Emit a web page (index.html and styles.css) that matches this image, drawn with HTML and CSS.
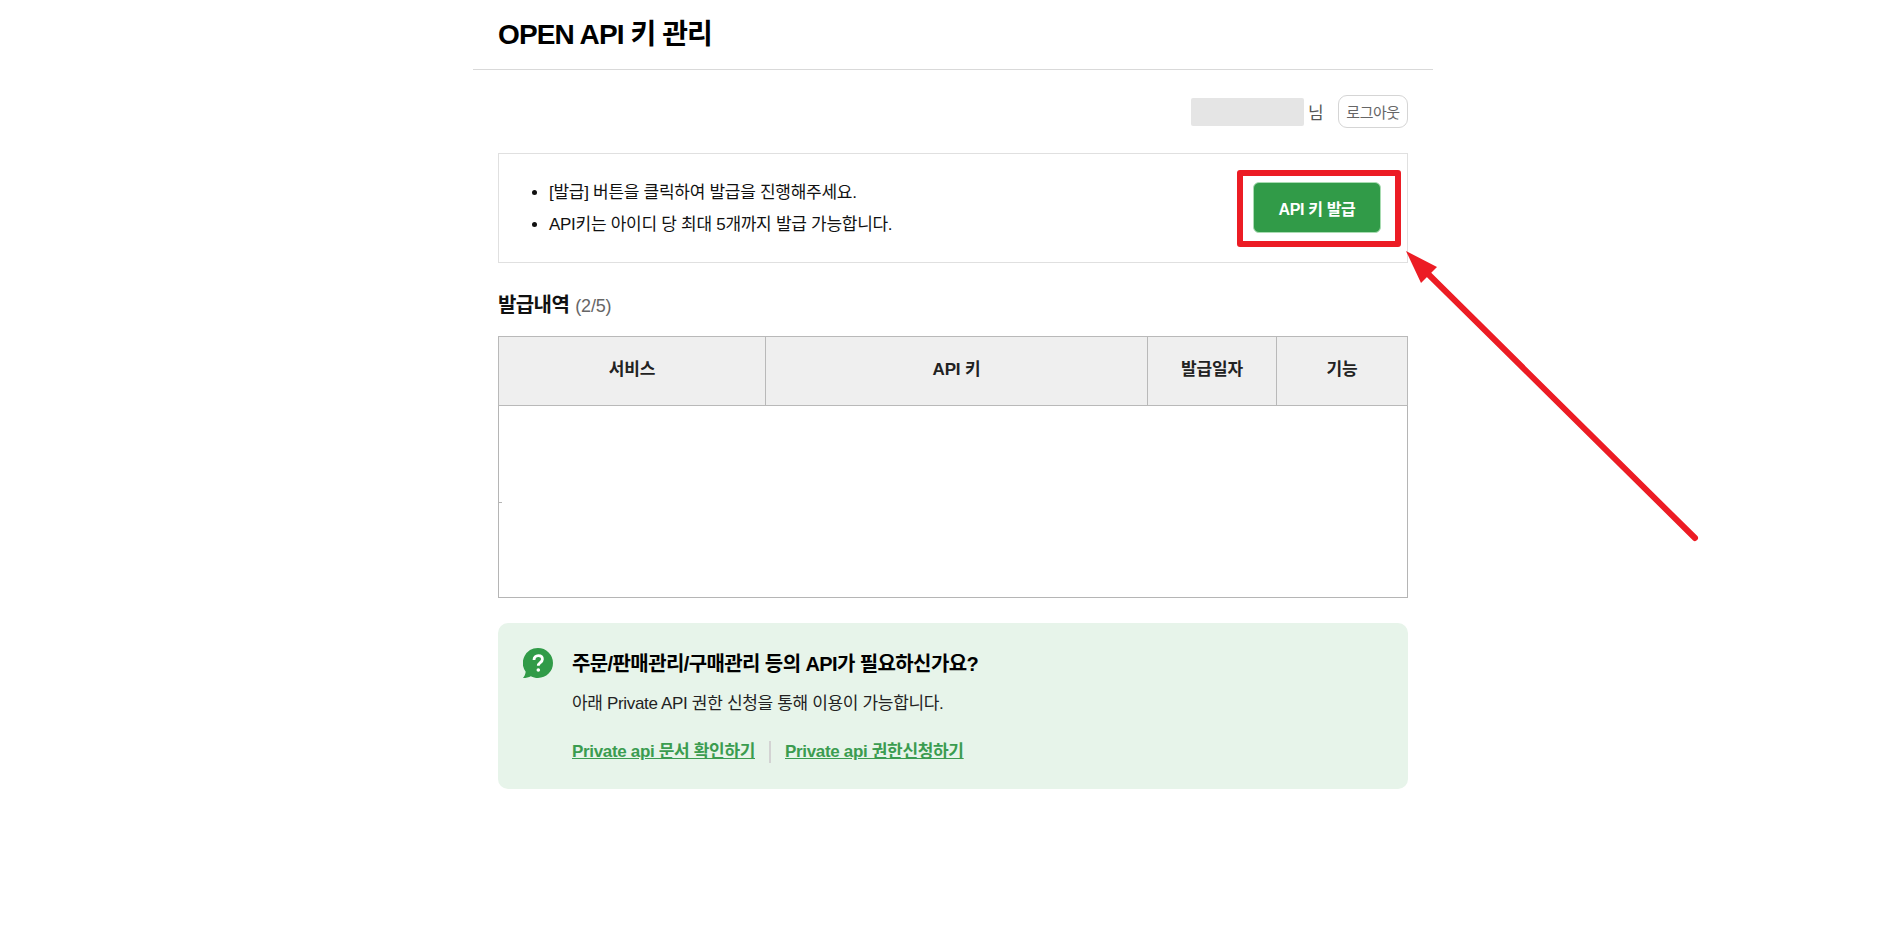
FILE: index.html
```html
<!DOCTYPE html>
<html lang="ko">
<head>
<meta charset="utf-8">
<title>OPEN API 키 관리</title>
<link rel="stylesheet" href="styles.css">
</head>
<body>
<div class="page">
  <header class="page-head"><h1>OPEN API 키 관리</h1></header>
  <main class="content">
    <div class="user-row">
      <span class="user-mask"></span>
      <span class="user-suffix">님</span>
      <button class="logout" type="button">로그아웃</button>
    </div>
    <section class="notice">
      <ul>
        <li>[발급] 버튼을 클릭하여 발급을 진행해주세요.</li>
        <li>API키는 아이디 당 최대 5개까지 발급 가능합니다.</li>
      </ul>
      <button class="issue" type="button">API 키 발급</button>
    </section>
    <h2 class="list-title">발급내역 <span>(2/5)</span></h2>
    <table class="keys">
      <colgroup><col class="c1"><col class="c2"><col class="c3"><col class="c4"></colgroup>
      <thead><tr><th>서비스</th><th>API 키</th><th>발급일자</th><th>기능</th></tr></thead>
      <tbody><tr><td colspan="4"><span class="tick"></span></td></tr></tbody>
    </table>
    <section class="private">
      <svg class="q-icon" viewBox="0 0 30 30" aria-hidden="true">
        <path fill="#319b48" d="M15 0a15 15 0 0 1 0 30c-2.600 0-5-.6-7.100-1.800C5.800 29.400 3 30 0 30c1.300-1.500 2.300-3.500 2.700-6.300A15 15 0 0 1 15 0z"/>
        <path fill="none" stroke="#fff" stroke-width="2.800" d="M11 12c0-2.800 1.800-4.400 4.300-4.400s4.100 1.500 4.100 3.600c0 3.400-4.100 3.400-4.100 6.500"/>
        <circle fill="#fff" cx="15.300" cy="22" r="1.800"/>
      </svg>
      <div class="private-body">
        <h3>주문/판매관리/구매관리 등의 API가 필요하신가요?</h3>
        <p>아래 Private API 권한 신청을 통해 이용이 가능합니다.</p>
        <div class="links">
          <a href="#">Private api 문서 확인하기</a>
          <i class="sep"></i>
          <a href="#">Private api 권한신청하기</a>
        </div>
      </div>
    </section>
  </main>
</div>
<div class="mark-box"></div>
<svg class="mark-arrow" viewBox="0 0 1903 935" aria-hidden="true">
  <line x1="1695" y1="538" x2="1418" y2="264" stroke="#ec1c24" stroke-width="6" stroke-linecap="round"/>
  <polygon points="1406,251 1437,267 1421,283" fill="#ec1c24"/>
</svg>
</body>
</html>
```
FILE: styles.css
```css
* { box-sizing: border-box; }
html, body { margin: 0; padding: 0; background: #fff; }
body {
  height: 935px;
  overflow: hidden;
  position: relative;
  font-family: "Liberation Sans", "Noto Sans CJK KR", sans-serif;
  color: #111;
}
.page { width: 960px; margin-left: 473px; }
.page-head { height: 70px; border-bottom: 1px solid #d9d9d9; padding: 18px 25px 0; }
.page-head h1 { margin: 0; font-size: 28px; line-height: 34px; font-weight: 700; letter-spacing: -0.9px; color: #000; }
.content { padding: 0 25px; }
.user-row { height: 83px; display: flex; align-items: center; justify-content: flex-end; }
.user-mask { width: 113px; height: 28px; background: #e5e5e5; border-radius: 2px; }
.user-suffix { margin-left: 4px; width: 30px; font-size: 17px; color: #555; }
.logout {
  width: 70px; height: 33px; padding: 0;
  border: 1px solid #d5d5d5; border-radius: 9px; background: #fff;
  font: 15px "Liberation Sans", "Noto Sans CJK KR", sans-serif; letter-spacing: -0.45px; color: #666;
}
.notice {
  height: 110px; border: 1px solid #e0e0e0;
  display: flex; align-items: center; justify-content: space-between;
  padding: 0 26px 0 26px;
}
.notice ul { margin: 2px 0 0; padding: 0 0 0 24px; font-size: 17px; line-height: 32px; letter-spacing: -0.28px; color: #111; }
.issue {
  width: 128px; height: 51px; margin-top: -1px; padding: 0; border: 1px solid #a9dcb2; border-radius: 6px;
  background: #319b48; color: #fff;
  font: 700 16px "Liberation Sans", "Noto Sans CJK KR", sans-serif; letter-spacing: -0.35px;
}
.list-title { margin: 26px 0 0; height: 32px; font-size: 20px; line-height: 32px; font-weight: 700; letter-spacing: -0.6px; color: #111; }
.list-title span { font-weight: 400; font-size: 18px; color: #666; letter-spacing: -0.15px; margin-left: 1px; }
.keys { margin-top: 15px; width: 909px; height: 262px; table-layout: fixed; border-collapse: collapse; border: 1px solid #b5b5b5; }
.c1 { width: 267px; } .c2 { width: 382px; } .c3 { width: 129px; } .c4 { width: 131px; }
.keys th { height: 69px; padding: 0 0 7px; background: #efefef; border: 1px solid #b9b9b9; font-size: 17px; font-weight: 700; color: #222; letter-spacing: -0.15px; }
.keys td { padding: 0; position: relative; }
.tick { position: absolute; left: 0; top: 96px; width: 3px; height: 1px; background: #b5b5b5; }
.private {
  margin-top: 25px; height: 166px; background: #e7f4ea; border-radius: 10px;
  display: flex; align-items: flex-start; padding: 25px 25px 0;
}
.q-icon { width: 30px; height: 30px; flex: none; }
.private-body { margin-left: 19px; }
.private h3 { margin: 3px 0 0; font-size: 20px; line-height: 26px; font-weight: 700; letter-spacing: -0.6px; color: #000; }
.private p { margin: 15px 0 0; font-size: 17px; line-height: 24px; letter-spacing: -0.33px; color: #222; }
.links { margin-top: 24px; display: flex; align-items: center; }
.links a { font-size: 17px; line-height: 24px; font-weight: 700; color: #3b9c50; letter-spacing: -0.33px; text-decoration: underline; }
.sep { width: 2px; height: 22px; background: #d3d3d3; margin: 0 14px; }
.mark-box { position: absolute; left: 1237px; top: 170px; width: 164px; height: 77px; border: 6px solid #ec1c24; border-radius: 3px; }
.mark-arrow { position: absolute; left: 0; top: 0; width: 1903px; height: 935px; pointer-events: none; }
```
